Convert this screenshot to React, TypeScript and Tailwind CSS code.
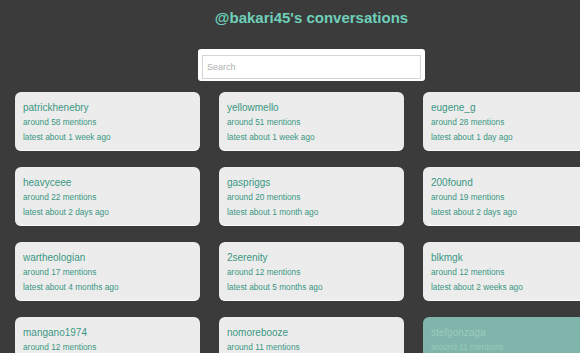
const people = [
  { name: 'patrickhenebry', count: 58, latest: '1 week' },
  { name: 'yellowmello', count: 51, latest: '1 week' },
  { name: 'eugene_g', count: 28, latest: '1 day' },
  { name: 'heavyceee', count: 22, latest: '2 days' },
  { name: 'gaspriggs', count: 20, latest: '1 month' },
  { name: '200found', count: 19, latest: '2 days' },
  { name: 'wartheologian', count: 17, latest: '4 months' },
  { name: '2serenity', count: 12, latest: '5 months' },
  { name: 'blkmgk', count: 12, latest: '2 weeks' },
  { name: 'mangano1974', count: 12, latest: '3 weeks' },
  { name: 'nomorebooze', count: 11, latest: '1 month' },
  { name: 'stefgonzaga', count: 11, latest: '2 months' },
];

export default function App() {
  return (
    <div className="w-[580px] h-[353px] overflow-hidden bg-[#3a3b3a] font-['Liberation_Sans',Arial,sans-serif]">
      <div className="w-[623px] flex flex-col items-center">
        <h1 className="mt-[9px] text-[15px] leading-[17px] font-bold text-[#6fcfba]">
          @bakari45's conversations
        </h1>
        <div className="mt-[23px] w-[227px] h-[32px] bg-white rounded-[3px] p-[4px]">
          <input
            placeholder="Search"
            className="w-full h-full border border-[#d4d4d4] px-[4px] text-[9px] text-[#555] placeholder:text-[#b0b0b0] focus:outline-none"
          />
        </div>
      </div>
      <div className="mt-[11px] ml-[15px] grid grid-cols-[185px_185px_185px] gap-x-[19px] gap-y-[16px]">
        {people.map((p, i) => {
          const hot = i === 11;
          return (
            <div
              key={p.name}
              className={
                hot
                  ? 'h-[59px] rounded-[6px] px-[8px] pt-[8px] bg-[#7fb5aa] text-[#9dcac0]'
                  : 'h-[59px] rounded-[6px] px-[8px] pt-[8px] bg-[#ececec] border-b border-[#fafafa] text-[#3a9783]'
              }
            >
              <div className="text-[10px] leading-[15px]">{p.name}</div>
              <div className="text-[8.3px] leading-[15px]">around {p.count} mentions</div>
              <div className="text-[8.3px] leading-[15px]">latest about {p.latest} ago</div>
            </div>
          );
        })}
      </div>
    </div>
  );
}
